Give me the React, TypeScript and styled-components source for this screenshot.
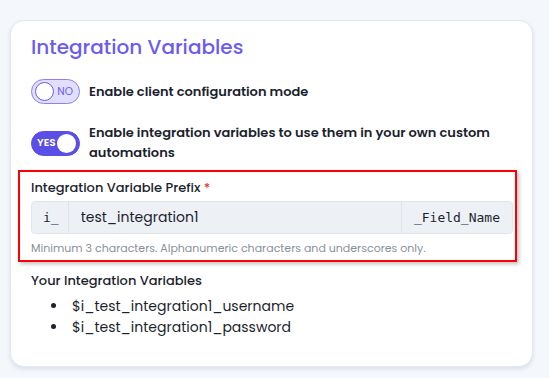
import React from 'react';
import styled, {createGlobalStyle} from 'styled-components';

const GlobalStyle = createGlobalStyle`
  * {
    box-sizing: border-box;
  }
  body {
    margin: 0;
    background: #f4f7fb;
    font-family: 'Poppins', 'Inter', 'Noto Sans', sans-serif;
    color: #1c1f2e;
  }
`;

const Toggle: React.FunctionComponent<{on: boolean}> = ({on}) => (
  <Switch $on={on}>
    {on ? <SwitchText $on>{'YES'}</SwitchText> : null}
    <Knob $on={on} />
    {!on ? <SwitchText $on={false}>{'NO'}</SwitchText> : null}
  </Switch>
);

const App: React.FunctionComponent = () => {
  const prefix = 'test_integration1';
  const variables = ['username', 'password'];

  return (
    <Page>
      <GlobalStyle />
      <Card>
        <Title>{'Integration Variables'}</Title>
        <OptionRow>
          <Toggle on={false} />
          <OptionLabel>{'Enable client configuration mode'}</OptionLabel>
        </OptionRow>
        <OptionRow>
          <Toggle on />
          <OptionLabel>{'Enable integration variables to use them in your own custom automations'}</OptionLabel>
        </OptionRow>
        <Highlight>
          <FieldLabel>
            {'Integration Variable Prefix '}
            <Required>{'*'}</Required>
          </FieldLabel>
          <InputGroup>
            <Addon $side="left">{'i_'}</Addon>
            <PrefixInput value={prefix} readOnly />
            <Addon $side="right">{'_Field_Name'}</Addon>
          </InputGroup>
          <Hint>{'Minimum 3 characters. Alphanumeric characters and underscores only.'}</Hint>
        </Highlight>
        <ListTitle>{'Your Integration Variables'}</ListTitle>
        <VarList>
          {variables.map((name) => (
            <li key={name}>{`$i_${prefix}_${name}`}</li>
          ))}
        </VarList>
      </Card>
    </Page>
  );
};

const Page = styled.div`
  padding: 20px 16px 12px 10px;
  min-height: 378px;
`;
const Card = styled.div`
  background: #ffffff;
  border: 1px solid #e4e9f0;
  border-radius: 14px;
  box-shadow: 0 2px 4px rgba(30, 50, 90, 0.12);
  padding: 12px 17px 28px 20px;
`;
const Title = styled.h2`
  margin: 0 0 18px;
  font-size: 20px;
  font-weight: 500;
  color: #6a5cf0;
  line-height: 28px;
`;
const OptionRow = styled.div`
  display: flex;
  align-items: center;
  gap: 9px;
  margin-bottom: 19px;
`;
const Switch = styled.div<{$on: boolean}>`
  flex: none;
  width: 49px;
  height: 25px;
  border-radius: 13px;
  display: flex;
  align-items: center;
  justify-content: space-between;
  padding: 0 3px;
  background: ${({$on}) => ($on ? '#5b4ee6' : '#e2defe')};
  border: 1px solid ${({$on}) => ($on ? '#5b4ee6' : '#8c80f3')};
`;
const Knob = styled.span<{$on: boolean}>`
  width: 19px;
  height: 19px;
  border-radius: 50%;
  background: #ffffff;
  border: ${({$on}) => ($on ? 'none' : '1.5px solid #6a5cf0')};
`;
const SwitchText = styled.span<{$on: boolean}>`
  font-size: 10.5px;
  font-weight: ${({$on}) => ($on ? 600 : 400)};
  color: ${({$on}) => ($on ? '#ffffff' : '#6a5cf0')};
  margin: ${({$on}) => ($on ? '0 0 0 2px' : '0 3px 0 0')};
`;
const OptionLabel = styled.span`
  font-size: 13px;
  font-weight: 600;
  line-height: 20px;
  color: #1c1f2e;
`;
const Highlight = styled.div`
  border: 2px solid #ff0000;
  box-shadow: 2px 2px 4px rgba(0, 0, 0, 0.25);
  margin: -12px -2px 0 -13px;
  padding: 6px 2px 4px 11px;
`;
const FieldLabel = styled.div`
  font-size: 13px;
  font-weight: 500;
  line-height: 20px;
  margin-bottom: 3px;
`;
const Required = styled.span`
  color: #e53935;
`;
const InputGroup = styled.div`
  display: flex;
  height: 33px;
  background: #edf1f6;
  border: 1px solid #dfe5ec;
  border-radius: 4px;
`;
const Addon = styled.span<{$side: 'left' | 'right'}>`
  display: flex;
  align-items: center;
  padding: ${({$side}) => ($side === 'left' ? '0 9px 0 11px' : '0 12px')};
  font-family: 'DejaVu Sans Mono', monospace;
  font-size: 13px;
  color: #1c1f2e;
  border-right: ${({$side}) => ($side === 'left' ? '1px solid #dfe5ec' : 'none')};
  border-left: ${({$side}) => ($side === 'right' ? '1px solid #dfe5ec' : 'none')};
`;
const PrefixInput = styled.input`
  flex: 1;
  min-width: 0;
  border: none;
  background: transparent;
  padding: 0 12px;
  font-family: 'Poppins', 'Inter', 'Noto Sans', sans-serif;
  font-size: 14px;
  color: #1c1f2e;
  outline: none;
`;
const Hint = styled.div`
  margin-top: 6px;
  font-size: 11px;
  color: #8a8f99;
  line-height: 16px;
`;
const ListTitle = styled.div`
  margin-top: 9px;
  font-size: 13px;
  font-weight: 500;
  line-height: 20px;
`;
const VarList = styled.ul`
  margin: 5px 0 0;
  padding-left: 37px;
  font-size: 14px;
  line-height: 21px;

  li {
    padding-left: 4px;
  }
`;

export default App;
